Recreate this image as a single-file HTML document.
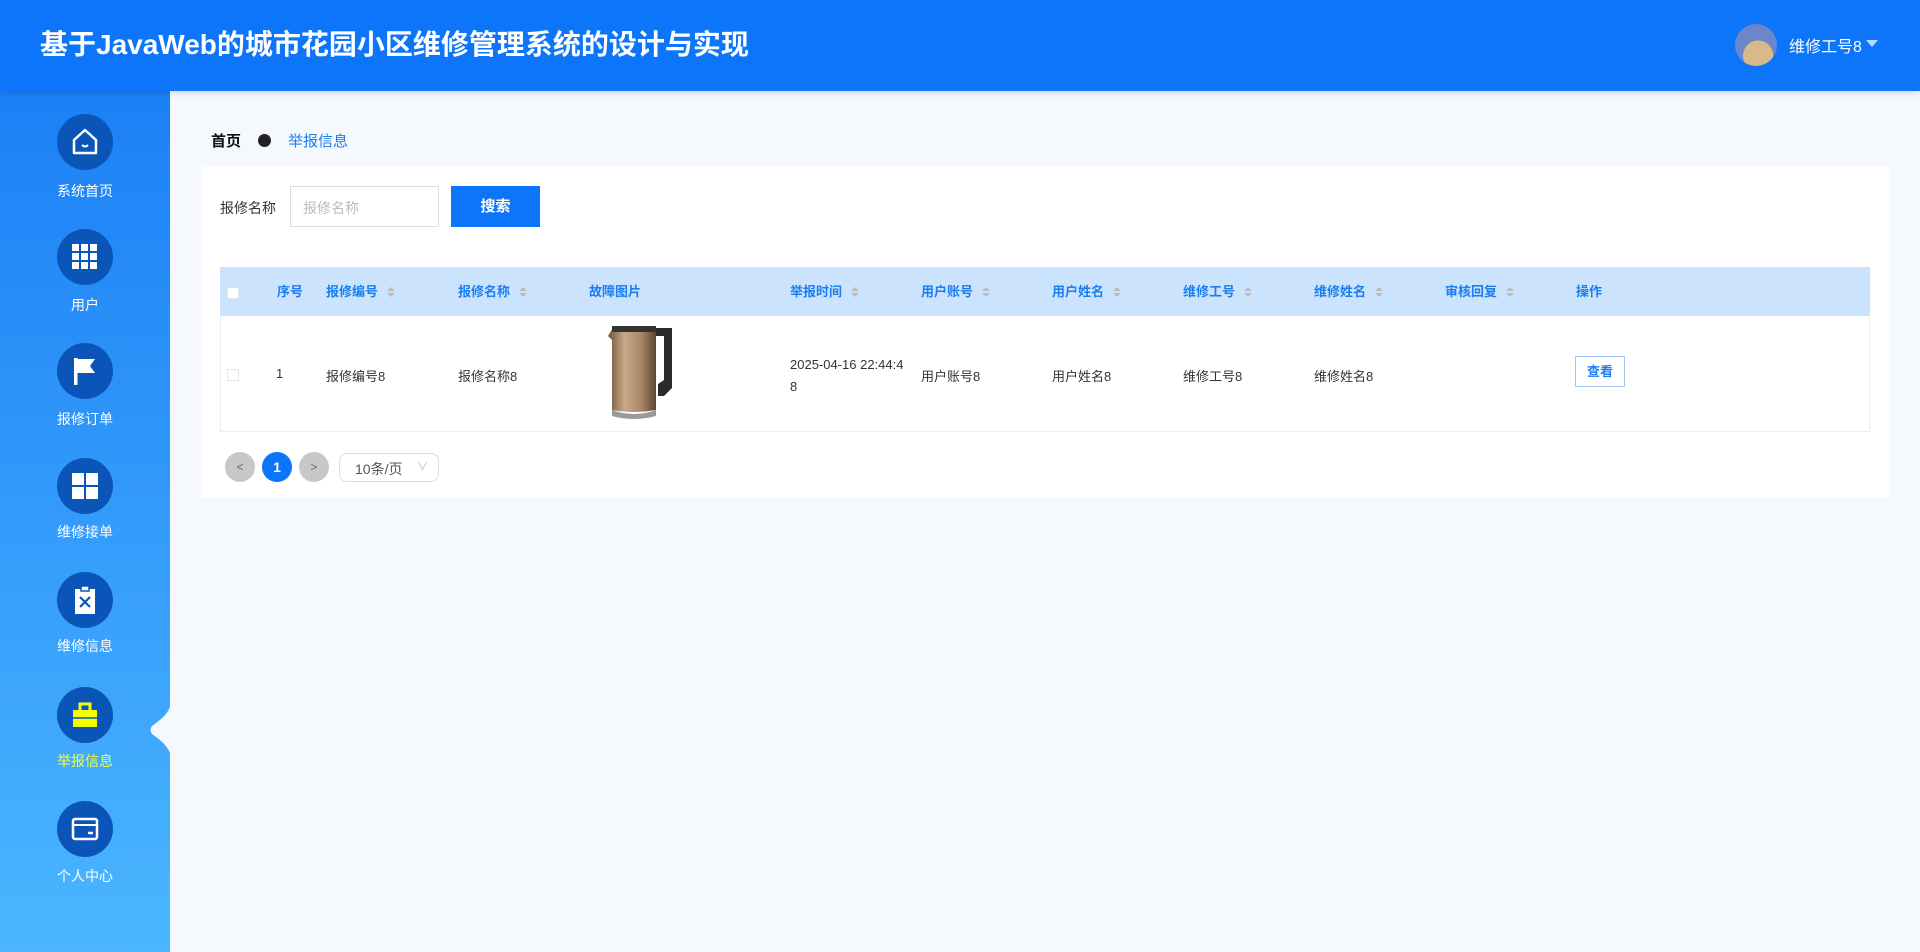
<!DOCTYPE html>
<html><head><meta charset="utf-8"><style>
*{margin:0;padding:0;box-sizing:border-box}
body{width:1920px;height:952px;overflow:hidden;background:#f5f8fd;font-family:"Liberation Sans","Noto Sans CJK SC",sans-serif;position:relative}
.hd{position:absolute;left:0;top:0;width:1920px;height:91px;background:#0d75fa;box-shadow:0 2px 6px rgba(0,0,0,.15);z-index:2}
.hd h1{position:absolute;left:40px;top:26px;color:#fff;font-size:28px;font-weight:bold;line-height:38px}
.av{position:absolute;left:1735px;top:24px;width:42px;height:42px;border-radius:50%;background:radial-gradient(circle at 55% 75%,#d9b98a 0 38%,#6b86c9 39%)}
.un{position:absolute;left:1789px;top:33px;color:#fff;font-size:16px}
.arr{position:absolute;left:1866px;top:40px;border:6px solid transparent;border-top:7px solid #b8d6ff}
.sb{position:absolute;left:0;top:91px;width:170px;height:861px;background:linear-gradient(#1c80f6,#4bb6ff)}
.ci{position:absolute;left:57px;width:56px;height:56px;border-radius:50%;background:#0b55b8}
.lb{position:absolute;left:0;width:170px;text-align:center;color:#fff;font-size:14px}
.lb.on{color:#f3ff3c}
.ci svg{position:absolute;left:13px;top:13px}
.bc{position:absolute;top:130px;font-size:15px}
.card{position:absolute;left:201px;top:167px;width:1688px;height:331px;background:#fff}
.th{position:absolute;top:267px;left:220px;width:1650px;height:49px;background:#cce3fd}
.row{position:absolute;top:316px;left:220px;width:1650px;height:116px;border:1px solid #e8eef5;border-top:none}
.c{position:absolute;font-size:13px;color:#333}
.h{position:absolute;top:284px;font-size:13px;color:#1a7ef0;font-weight:bold;line-height:16px}
.s{display:inline-block;margin-left:9px;vertical-align:top;width:8px;height:16px;position:relative}
.s:before{content:"";position:absolute;left:0;top:3px;border:4px solid transparent;border-bottom:4px solid #bbb;border-top:none}
.s:after{content:"";position:absolute;left:0;top:9px;border:4px solid transparent;border-top:4px solid #bbb;border-bottom:none}
.pg{position:absolute;top:452px;width:30px;height:30px;border-radius:50%;background:#c8c8c8;color:#666;text-align:center;line-height:30px;font-size:12px}
</style></head><body>
<div class="hd"><h1>基于JavaWeb的城市花园小区维修管理系统的设计与实现</h1>
<div class="av"></div><div class="un">维修工号8</div><div class="arr"></div></div>
<div class="sb">
<svg style="position:absolute;left:149px;top:616px" width="21" height="46"><path d="M21 0 C18 8 10 14 3 19 Q0 23 3 27 C10 32 18 38 21 46Z" fill="#f5f8fd"/></svg>
</div>
<div class="ci" style="top:114px"><svg width="30" height="30" viewBox="0 0 30 30"><path d="M4 13 L15 3 L26 13 V26 H4Z" fill="none" stroke="#fff" stroke-width="2.5" stroke-linejoin="round"/><path d="M12 18 Q15 21 18 18" fill="none" stroke="#fff" stroke-width="2"/></svg></div>
<div class="lb" style="top:181px">系统首页</div>
<div class="ci" style="top:229px"><svg width="30" height="30" viewBox="0 0 30 30" fill="#fff"><rect x="2" y="2" width="7" height="7"/><rect x="11" y="2" width="7" height="7"/><rect x="20" y="2" width="7" height="7"/><rect x="2" y="11" width="7" height="7"/><rect x="11" y="11" width="7" height="7"/><rect x="20" y="11" width="7" height="7"/><rect x="2" y="20" width="7" height="7"/><rect x="11" y="20" width="7" height="7"/><rect x="20" y="20" width="7" height="7"/></svg></div>
<div class="lb" style="top:295px">用户</div>
<div class="ci" style="top:343px"><svg width="30" height="30" viewBox="0 0 30 30" fill="#fff"><rect x="4" y="2" width="3.5" height="27"/><path d="M7 3 H25 L20 10 L25 17 H7Z"/></svg></div>
<div class="lb" style="top:409px">报修订单</div>
<div class="ci" style="top:458px"><svg width="30" height="30" viewBox="0 0 30 30" fill="#fff"><rect x="2" y="2" width="12" height="12"/><rect x="16" y="2" width="12" height="12"/><rect x="2" y="16" width="12" height="12"/><rect x="16" y="16" width="12" height="12"/></svg></div>
<div class="lb" style="top:522px">维修接单</div>
<div class="ci" style="top:572px"><svg width="30" height="30" viewBox="0 0 30 30"><rect x="5" y="4" width="20" height="25" fill="#fff"/><rect x="11" y="1" width="8" height="5" fill="#fff" stroke="#0b55b8" stroke-width="1.5"/><path d="M10 12 L20 22 M20 12 L10 22" stroke="#0b55b8" stroke-width="2.2"/></svg></div>
<div class="lb" style="top:636px">维修信息</div>
<div class="ci" style="top:687px"><svg width="30" height="30" viewBox="0 0 30 30"><rect x="3" y="10" width="24" height="17" fill="#f5ff00"/><path d="M10 10 V4 H20 V10" fill="none" stroke="#f5ff00" stroke-width="3"/><path d="M3 18 H27" stroke="#0b55b8" stroke-width="1.5"/></svg></div>
<div class="lb on" style="top:751px">举报信息</div>
<div class="ci" style="top:801px"><svg width="30" height="30" viewBox="0 0 30 30"><rect x="3" y="5" width="24" height="20" rx="2" fill="none" stroke="#fff" stroke-width="2.5"/><path d="M3 11 H27" stroke="#fff" stroke-width="2"/><path d="M18 19 H23" stroke="#fff" stroke-width="2.5"/></svg></div>
<div class="lb" style="top:866px">个人中心</div>

<div class="bc" style="left:211px;font-weight:bold;color:#111">首页</div>
<div style="position:absolute;left:258px;top:134px;width:13px;height:13px;border-radius:50%;background:#222"></div>
<div class="bc" style="left:288px;color:#1a7ef0">举报信息</div>
<div class="card"></div>
<div class="c" style="left:220px;top:198px;font-size:14px">报修名称</div>
<div style="position:absolute;left:290px;top:186px;width:149px;height:41px;border:1px solid #ddd;background:#fff;color:#bbb;font-size:14px;padding:11px 12px">报修名称</div>
<div style="position:absolute;left:451px;top:186px;width:89px;height:41px;background:#0d75fa;color:#fff;font-size:15px;font-weight:bold;text-align:center;line-height:41px">搜索</div>
<div class="th"></div><div class="row"></div>
<div style="position:absolute;left:227px;top:287px;width:12px;height:12px;background:#fff;border:1px solid #dfe6ee"></div>
<div class="h" style="left:277px">序号</div>
<div class="h" style="left:326px">报修编号<span class="s"></span></div>
<div class="h" style="left:458px">报修名称<span class="s"></span></div>
<div class="h" style="left:589px">故障图片</div>
<div class="h" style="left:790px">举报时间<span class="s"></span></div>
<div class="h" style="left:921px">用户账号<span class="s"></span></div>
<div class="h" style="left:1052px">用户姓名<span class="s"></span></div>
<div class="h" style="left:1183px">维修工号<span class="s"></span></div>
<div class="h" style="left:1314px">维修姓名<span class="s"></span></div>
<div class="h" style="left:1445px">审核回复<span class="s"></span></div>
<div class="h" style="left:1576px">操作</div>
<div style="position:absolute;left:227px;top:369px;width:12px;height:12px;border:1px solid #dfe6ee"></div>
<div class="c" style="left:276px;top:366px">1</div>
<div class="c" style="left:326px;top:366px">报修编号8</div>
<div class="c" style="left:458px;top:366px">报修名称8</div>
<svg style="position:absolute;left:600px;top:322px" width="80" height="100" viewBox="0 0 80 100"><defs><linearGradient id="k" x1="0" x2="1"><stop offset="0" stop-color="#6e5640"/><stop offset=".35" stop-color="#c9a987"/><stop offset=".7" stop-color="#a78566"/><stop offset="1" stop-color="#5d4632"/></linearGradient></defs><path d="M50 6 H72 V66 L64 74 H58 V62 L64 58 V14 H52Z" fill="#2b2b2b"/><path d="M8 14 L14 4 H54 L56 10 V88 Q34 92 12 88 V18Z" fill="url(#k)"/><rect x="12" y="4" width="44" height="6" fill="#333"/><path d="M12 88 Q34 96 56 88 V94 Q34 100 12 94Z" fill="#999"/></svg>
<div class="c" style="left:790px;top:354px;line-height:22px">2025-04-16 22:44:4<br>8</div>
<div class="c" style="left:921px;top:366px">用户账号8</div>
<div class="c" style="left:1052px;top:366px">用户姓名8</div>
<div class="c" style="left:1183px;top:366px">维修工号8</div>
<div class="c" style="left:1314px;top:366px">维修姓名8</div>
<div style="position:absolute;left:1575px;top:356px;width:50px;height:31px;border:1px solid #9cc6f5;color:#1a7ef0;font-size:13px;text-align:center;line-height:29px;font-weight:bold">查看</div>
<div class="pg" style="left:225px">&lt;</div>
<div class="pg" style="left:262px;background:#0d75fa;color:#fff;font-weight:bold;font-size:14px">1</div>
<div class="pg" style="left:299px">&gt;</div>
<div style="position:absolute;left:339px;top:453px;width:100px;height:29px;border:1px solid #ddd;border-radius:8px;font-size:14px;color:#555;padding:5px 0 0 15px">10条/页<span style="position:absolute;right:10px;top:4px;color:#bbb;font-size:11px">∨</span></div>
</body></html>
